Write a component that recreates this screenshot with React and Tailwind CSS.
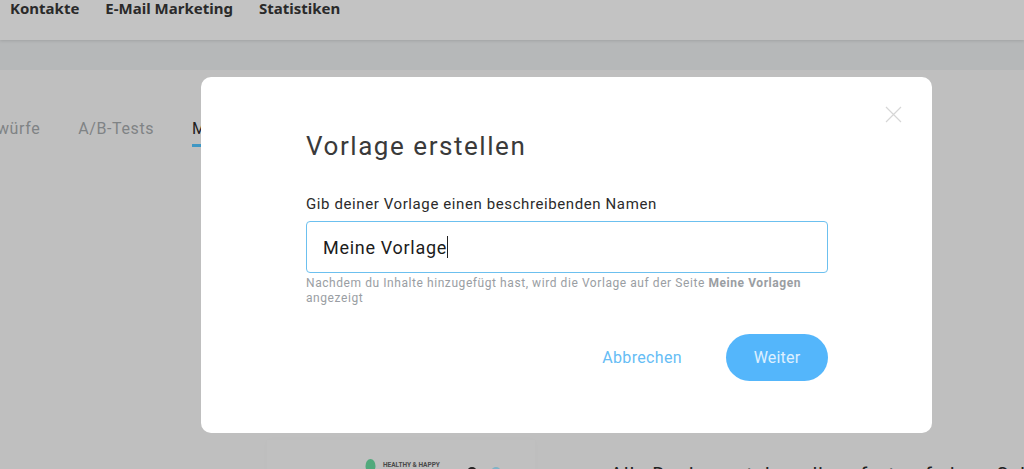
export default function App() {
  return (
    <div className="relative w-[1024px] h-[469px] overflow-hidden bg-[#bfbfbf] font-['Roboto',sans-serif]">
      <header className="h-10 bg-[#c3c3c3] shadow-[0_1px_3px_rgba(0,0,0,0.12)] flex items-start pl-2.5 gap-[26px] relative font-['Noto_Sans',sans-serif] font-bold text-[15px] leading-4 text-[#2a2a2a]">
        <span>Kontakte</span>
        <span>E-Mail Marketing</span>
        <span>Statistiken</span>
      </header>
      <div className="h-[30px] bg-[#b6b8b9]" />
      <nav className="flex items-start gap-[38px] pt-[49px] -ml-[3px] text-[16px] leading-5 tracking-[0.6px] text-[#7f8385] font-normal">
        <span>würfe</span>
        <span>A/B-Tests</span>
        <span className="text-[#222] border-b-[3px] border-[#3f97c4] pb-[5px] w-6 overflow-hidden">Meine</span>
      </nav>

      <div className="absolute left-[267px] top-[440px] w-[268px] h-[40px] bg-[#c0c0c0] shadow-[0_0_8px_rgba(0,0,0,0.015)] pl-[98px] pt-[19px] flex items-start gap-[7px]">
        <svg width="11" height="14" viewBox="0 0 11 14"><ellipse cx="5.5" cy="7" rx="5" ry="7" fill="#52a97c" /></svg>
        <span className="text-[6.5px] leading-3 font-bold text-[#4a4a4a] whitespace-nowrap">HEALTHY &amp; HAPPY</span>
      </div>
      <svg className="absolute left-[458px] top-[464px]" width="46" height="8" viewBox="0 0 46 8">
        <circle cx="14" cy="8" r="5" fill="#222" />
        <circle cx="38" cy="8" r="5" fill="#7fb3c6" />
      </svg>
      <span className="absolute left-[610px] top-[463px] text-[20px] leading-6 tracking-[0.8px] text-[#222] whitespace-nowrap">Alle Designs stehen dir sofort auf einen Schl</span>

      <div className="absolute left-[201px] top-[77px] w-[731px] h-[356px] bg-white rounded-[10px] pl-[105px] pr-[104px] pt-[53px]">
        <svg className="absolute left-[684px] top-[29px]" width="17" height="17" viewBox="0 0 17 17" fill="none" stroke="#d6d6d6" strokeWidth="1.2">
          <path d="M1 1l15 15M16 1L1 16" />
        </svg>
        <h2 className="text-[26px] leading-8 tracking-[1.55px] text-[#3a3a3a] font-normal">Vorlage erstellen</h2>
        <label className="block mt-[32px] text-[15px] leading-5 tracking-[0.6px] text-[#2b2b2b]">Gib deiner Vorlage einen beschreibenden Namen</label>
        <div className="mt-[7px] h-[52px] border border-[#6cc0ef] rounded-[4px] flex items-center pl-4 text-[18px] tracking-[0.7px] text-[#1c1c1c]">
          Meine Vorlage<span className="inline-block w-px h-[22px] bg-[#222]" />
        </div>
        <p className="mt-[3px] text-[12px] leading-[15px] tracking-[0.57px] text-[#9a9ea3]">
          Nachdem du Inhalte hinzugefügt hast, wird die Vorlage auf der Seite <span className="font-bold">Meine Vorlagen</span> angezeigt
        </p>
        <div className="mt-[28px] flex items-center justify-end gap-[44px]">
          <span className="text-[16px] tracking-[0.35px] text-[#66bdf5]">Abbrechen</span>
          <span className="w-[102px] h-[47px] rounded-full bg-[#54b6fb] text-white/80 text-[16px] tracking-[0.2px] flex items-center justify-center">Weiter</span>
        </div>
      </div>
    </div>
  );
}
